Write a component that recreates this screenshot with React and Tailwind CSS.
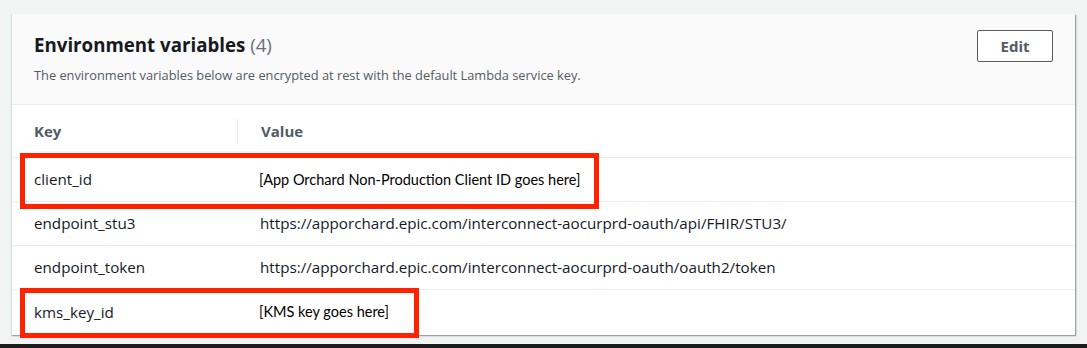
const rows = [
  { key: "client_id", value: "[App Orchard Non-Production Client ID goes here]", pasted: true },
  { key: "endpoint_stu3", value: "https://apporchard.epic.com/interconnect-aocurprd-oauth/api/FHIR/STU3/" },
  { key: "endpoint_token", value: "https://apporchard.epic.com/interconnect-aocurprd-oauth/oauth2/token" },
  { key: "kms_key_id", value: "[KMS key goes here]", pasted: true },
];

export default function App() {
  return (
    <div className="w-[1087px] h-[348px] bg-[#f2f3f3] flex flex-col overflow-hidden" style={{ fontFamily: '"Open Sans", "Noto Sans", sans-serif' }}>
      <div className="pl-[11px] pt-[14px]">
        <div className="relative w-[1064px] h-[321px] bg-white border-l border-[#d5dbdb] shadow-[1px_1px_1px_0_rgba(0,28,36,0.3),1px_1px_2px_0_rgba(0,28,36,0.15)]">
          <div className="h-[91px] bg-[#fafafa] border-b border-[#eaeded] flex justify-between pl-[22px] pr-[22px] pt-[16px]">
            <div>
              <h2 className="text-[18.7px] leading-[30px] font-bold text-[#16191f]">
                Environment variables <span className="font-normal text-[#687078]">(4)</span>
              </h2>
              <p className="mt-[6px] text-[12.8px] leading-[18px] text-[#545b64]">
                The environment variables below are encrypted at rest with the default Lambda service key.
              </p>
            </div>
            <button className="w-[76px] h-[32px] border border-[#545b64] rounded-[2px] bg-white text-[15px] font-bold text-[#545b64]">
              Edit
            </button>
          </div>

          <div className="h-[53px] flex items-center border-b border-[#eaeded] text-[15px] font-bold text-[#545b64]">
            <div className="w-[226px] pl-[22px] h-[25px] flex items-center border-r border-[#eaeded]">Key</div>
            <div className="pl-[23px]">Value</div>
          </div>

          {rows.map((r, i) => (
            <div
              key={r.key}
              className={`h-[44px] flex items-center text-[15.2px] text-[#16191f] ${i < rows.length - 1 ? "border-b border-[#eaeded]" : ""}`}
            >
              <div className="w-[226px] pl-[22px]">{r.key}</div>
              {r.pasted ? (
                <div className="pl-[21px] text-[14.5px] text-black" style={{ fontFamily: 'Lato, "Liberation Sans", sans-serif' }}>
                  {r.value}
                </div>
              ) : (
                <div className="pl-[22px]">{r.value}</div>
              )}
            </div>
          ))}

          <div className="absolute left-[8px] top-[139px] w-[579px] h-[56px] border-[5px] border-[#ff2200]" />
          <div className="absolute left-[8px] top-[274px] w-[399px] h-[50px] border-[5px] border-[#ff2200]" />
        </div>
      </div>
      <div className="mt-auto h-[4px] bg-[#1b1b1b]" />
    </div>
  );
}
